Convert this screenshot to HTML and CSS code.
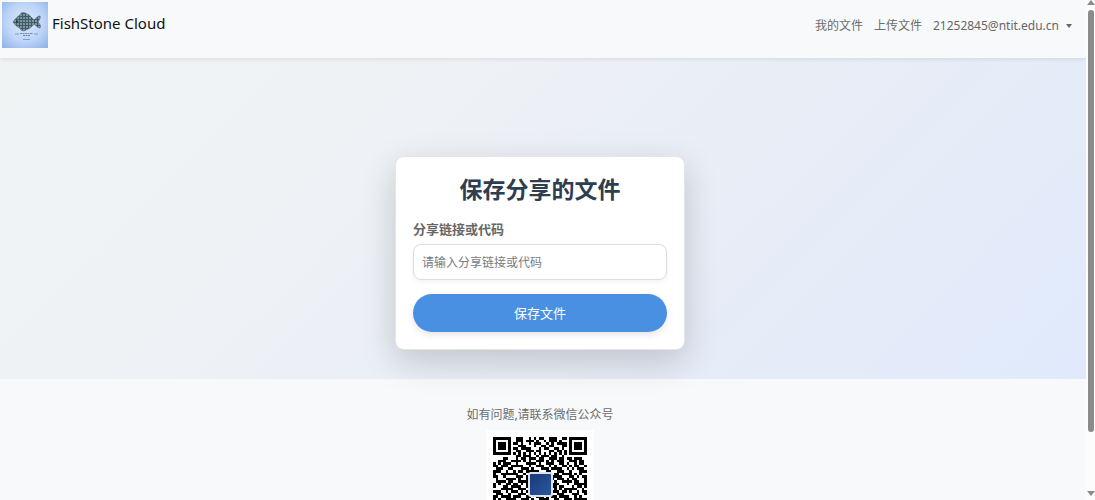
FILE: index.html
```html
<!DOCTYPE html>
<html lang="zh-CN">
<head>
<meta charset="utf-8">
<meta name="viewport" content="width=device-width, initial-scale=1">
<title>FishStone Cloud</title>
<link rel="stylesheet" href="styles.css">
</head>
<body>
<div class="page">
  <header class="navbar">
    <a class="brand" href="#">
      <svg class="brand-logo" viewBox="0 0 46 46" aria-hidden="true">
        <defs>
          <radialGradient id="sky" cx=".5" cy=".45" r=".7">
            <stop offset="0" stop-color="#deebff"/>
            <stop offset=".6" stop-color="#bcd3f8"/>
            <stop offset="1" stop-color="#92b4e9"/>
          </radialGradient>
          <pattern id="stones" width="3" height="3" patternUnits="userSpaceOnUse">
            <rect width="3" height="3" fill="#3f5c68"/>
            <circle cx="1" cy="1" r="1" fill="#8fabae"/>
          </pattern>
        </defs>
        <rect width="46" height="46" fill="url(#sky)"/>
        <path d="M11 20C14 16 16 14 18 13C19 10 22 10 25 12C28 13 30 16 32 18C34 16 36 14 38 14C39 16 37 18 36 20C38 22 39 24 38 26C35 26 34 23 32 22C30 25 27 27 24 28C21 30 18 28 18 26C15 25 13 23 11 20Z" fill="url(#stones)" stroke="#526d77" stroke-width=".7"/>
        <circle cx="15" cy="19.500" r="1" fill="#192b35"/>
        <path d="M13 32H17M32 32H36M21 37.500H28" stroke="#6aa4d8" stroke-width="1"/>
        <path d="M18 31.500H31M21 33.500H28" stroke="#5d6f88" stroke-width=".8" stroke-dasharray="2 .5"/>
      </svg>
      <span>FishStone Cloud</span>
    </a>
    <nav class="nav">
      <a href="#">我的文件</a>
      <a href="#">上传文件</a>
      <button class="account" type="button">21252845@ntit.edu.cn<span class="caret"></span></button>
    </nav>
  </header>
  <main class="hero">
    <form class="card">
      <h1 class="title">保存分享的文件</h1>
      <label class="label" for="share">分享链接或代码</label>
      <input class="field" id="share" type="text" placeholder="请输入分享链接或代码">
      <button class="submit" type="submit">保存文件</button>
    </form>
  </main>
  <footer class="footer">
    <p class="contact">如有问题,请联系微信公众号</p>
    <div class="qr">
      <svg id="qr" viewBox="0 0 37 37" shape-rendering="crispEdges" role="img" aria-label="微信公众号">
        <path id="qr-modules"/>
      </svg>
      <span class="qr-badge"></span>
    </div>
  </footer>
</div>
<div class="scrollbar" aria-hidden="true">
  <span class="arrow-up"></span>
  <span class="thumb"></span>
  <span class="arrow-down"></span>
</div>
<script src="qr.js"></script>
</body>
</html>
```
FILE: styles.css
```css
* { box-sizing: border-box; }
body {
  margin: 0;
  height: 100vh;
  display: grid;
  grid-template-columns: 1fr 9px;
  background: #f8f9fb;
  color: #6c6c6c;
  font: 12px/18px "Noto Sans", "Noto Sans CJK SC", sans-serif;
}
button, input { font: inherit; }
.page {
  min-width: 0;
  height: 100vh;
  overflow: auto;
  scrollbar-width: none;
}
.navbar {
  position: relative;
  display: flex;
  justify-content: space-between;
  align-items: flex-start;
  height: 58px;
  padding: 2px 14px 0 2px;
  background: #f8f9fb;
  box-shadow: 0 1px 4px rgba(0, 0, 0, .1);
}
.brand {
  display: flex;
  align-items: center;
  gap: 4px;
  color: #111;
  font-size: 15px;
  line-height: 20px;
  text-decoration: none;
}
.brand span { margin-bottom: 4px; }
.brand-logo { width: 46px; height: 46px; }
.nav {
  display: flex;
  gap: 11px;
  padding-top: 15px;
}
.nav a { color: #6c6c6c; text-decoration: none; }
.account {
  display: flex;
  align-items: center;
  gap: 7px;
  padding: 0;
  border: 0;
  background: none;
  color: #666;
}
.caret {
  border: 3px solid transparent;
  border-top: 4px solid #666;
  border-bottom: 0;
}
.hero {
  display: flex;
  justify-content: center;
  padding: 98px 6px 29px 0;
  background: linear-gradient(135deg, #f0f3f4 0%, #eff2f5 30%, #e6ecf7 70%, #e0eafc 100%);
}
.card {
  position: relative;
  display: flex;
  flex-direction: column;
  width: 290px;
  padding: 18px 17px 17px;
  border: 1px solid #e4e5e7;
  border-radius: 9px;
  background: #fff;
  box-shadow: 0 11px 34px rgba(0, 0, 0, .18);
}
.title {
  margin: 0 0 17px;
  color: #2c3e50;
  font-size: 23px;
  line-height: 28px;
  text-align: center;
}
.label {
  margin-bottom: 6px;
  color: #666;
  font-size: 13px;
  font-weight: 700;
}
.field {
  width: 100%;
  height: 36px;
  margin-bottom: 14px;
  padding: 0 8px;
  border: 1px solid #ddd;
  border-radius: 8px;
  background: #fff;
  box-shadow: 0 2px 4px rgba(0, 0, 0, .05);
}
.field::placeholder { color: #777c82; opacity: 1; }
.submit {
  height: 38px;
  border: 0;
  border-radius: 19px;
  background: #4a90e2;
  box-shadow: 0 3px 7px rgba(0, 0, 0, .1);
  color: #fff;
  font-size: 13px;
}
.footer {
  display: flex;
  flex-direction: column;
  align-items: center;
  padding: 27px 6px 24px 0;
}
.contact { margin: 0 0 6px; }
.qr {
  display: grid;
  place-items: center;
  width: 108px;
  height: 108px;
  background: #fff;
}
.qr svg, .qr-badge { grid-area: 1 / 1; }
.qr svg { width: 94px; height: 94px; }
.qr-badge {
  z-index: 1;
  width: 25px;
  height: 25px;
  border: 2px solid #dbe2ec;
  border-radius: 3px;
  background: linear-gradient(135deg, #183a78, #2b579f);
}
.scrollbar {
  display: flex;
  flex-direction: column;
  align-items: center;
  padding: 0 0 4px 1px;
  background: #fcfcfc;
}
.arrow-up {
  border: 4px solid transparent;
  border-top: 0;
  border-bottom: 5px solid #8b8b8b;
}
.thumb {
  width: 6px;
  height: 85%;
  margin-top: 5px;
  border-radius: 3px;
  background: #8b8b8b;
}
.arrow-down {
  margin-top: auto;
  border: 4px solid transparent;
  border-bottom: 0;
  border-top: 5px solid #8b8b8b;
}
```
FILE: qr.js
```js
const rows = [
  "1111111001110010101100111001101111111",
  "1000001001110111010010111010001000001",
  "1011101011010010111001010111101011101",
  "1011101000111000100110110001101011101",
  "1011101011011110001011001101001011101",
  "1000001001100111011000110110101000001",
  "1111111010101010101010101010101111111",
  "0000000001101110010111011001000000000",
  "0000110001011011101100111011011011100",
  "0011100111101010011101010111001110110",
  "1010111001000111101001110011010010110",
  "1101110111110010011100101001101011001",
  "0111001100011101000111011110010101110",
  "1110010010110111110001100111001000111",
  "1001111111001011000001101101111010100",
  "1100100001110111000000011110001101011",
  "0100011110100110000000010111010110001",
  "0111101100111101000000001001111011001",
  "1010011011010110000000011100010011111",
  "1000110111100111000000011011000101101",
  "0001111100111010000001101010111110010",
  "1110010111010100000000111101101001011",
  "0111001000111011101110100111000111001",
  "1101111011100110011101011011110010100",
  "1010011110011101001111001100111011111",
  "0110101001110111101001101011010101101",
  "1011011100101100111010110110011011010",
  "1101100111010011100111001101101110001",
  "1010011010110100111011011001111110110",
  "0000000010111001001110010111000101101",
  "1111111011001101110011011011010110011",
  "1000001001111010011100110101000111010",
  "1011101010101101110111001101111110110",
  "1011101001110010101001110110101001011",
  "1011101011001111011101001011011110110",
  "1000001001101010110010111001010110101",
  "1111111011010111001101011101100101101"
];
const path = rows.map((row, y) =>
  [...row].map((cell, x) => cell === "1" ? `M${x} ${y}h1v1h-1z` : "").join("")
).join("");
document.getElementById("qr-modules").setAttribute("d", path);
```
